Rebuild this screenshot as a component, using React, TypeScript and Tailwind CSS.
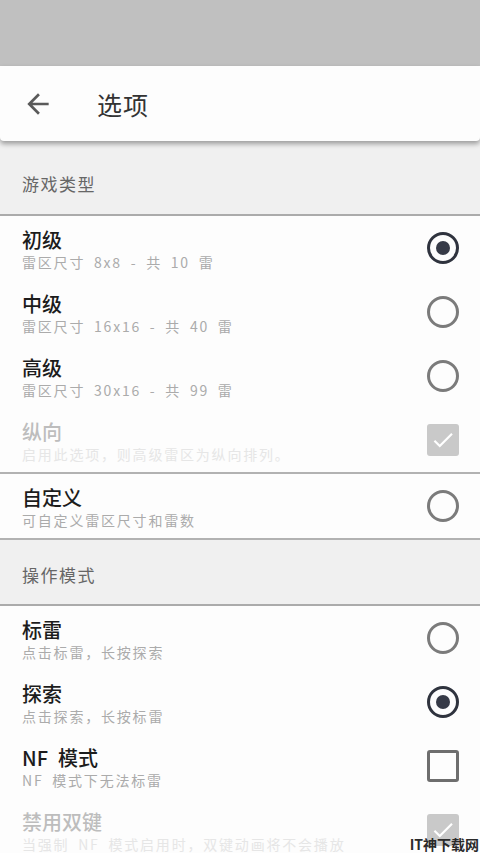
import React from "react";

const font = { fontFamily: '"Noto Sans CJK SC", "Noto Sans", sans-serif' };

type Control = "on" | "off" | "box" | "boxDisabled";

function Radio({ on }: { on: boolean }) {
  if (on) {
    return (
      <div className="w-[32px] h-[32px] rounded-full border-[3.5px] border-[#2f333e] flex items-center justify-center">
        <div className="w-[14px] h-[14px] rounded-full bg-[#363a47]" />
      </div>
    );
  }
  return <div className="w-[32px] h-[32px] rounded-full border-[3px] border-[#7b7b7b]" />;
}

function Check({ disabled }: { disabled: boolean }) {
  if (disabled) {
    return (
      <div className="w-[32px] h-[32px] rounded-[3px] bg-[#c9c9c9] flex items-center justify-center">
        <svg width="26" height="26" viewBox="0 0 24 24">
          <path d="M9 16.2 4.8 12l-1.4 1.4L9 19 21 7l-1.4-1.4L9 16.2z" fill="#ffffff" />
        </svg>
      </div>
    );
  }
  return <div className="w-[32px] h-[32px] rounded-[3px] border-[3px] border-[#6e6e6e]" />;
}

function Row({
  title,
  sub,
  control,
  disabled = false,
  border = false,
}: {
  title: string;
  sub: string;
  control: Control;
  disabled?: boolean;
  border?: boolean;
}) {
  return (
    <div
      className={`flex items-center h-[64px] pl-[22px] pr-[21px] bg-[#fdfdfd] box-content ${
        border ? "border-b-2 border-[#b2b2b2]" : ""
      }`}
    >
      <div className="flex-1 flex flex-col pt-1">
        <div
          className={`text-[20px] leading-[24px] font-medium whitespace-pre ${
            disabled ? "text-[#bdbdbd]" : "text-[#1c1c1c]"
          }`}
        >
          {title}
        </div>
        <div
          className={`text-[14px] leading-[20px] tracking-[1.8px] whitespace-pre ${
            disabled ? "text-[#e6e6e6]" : "text-[#ababab]"
          }`}
        >
          {sub}
        </div>
      </div>
      {control === "on" && <Radio on />}
      {control === "off" && <Radio on={false} />}
      {control === "box" && <Check disabled={false} />}
      {control === "boxDisabled" && <Check disabled />}
    </div>
  );
}

function SectionHeader({ label, top }: { label: string; top: string }) {
  return (
    <div className={`bg-[#f0f0f0] border-b-2 border-[#ababab] pl-[22px] ${top}`}>
      <div className="text-[17px] leading-[24px] text-[#666666] tracking-[1.5px]">{label}</div>
    </div>
  );
}

export default function App() {
  return (
    <div className="relative w-[480px] h-[853px] overflow-hidden bg-[#f0f0f0]" style={font}>
      {/* status bar */}
      <div className="h-[66px] bg-[#c0c0c0]" />

      {/* toolbar */}
      <div className="relative z-10 h-[75px] bg-[#fdfdfd] rounded-b-[4px] shadow-[0_3px_5px_rgba(0,0,0,0.35)] flex items-center">
        <div className="w-[97px] pl-[22px] flex items-center">
          <svg width="32" height="32" viewBox="0 0 24 24">
            <path
              d="M20 11H7.83l5.59-5.59L12 4l-8 8 8 8 1.41-1.41L7.83 13H20v-2z"
              fill="#5a5a5a"
            />
          </svg>
        </div>
        <div className="text-[25px] leading-[30px] text-[#333333] tracking-[1px]">选项</div>
      </div>

      <SectionHeader label="游戏类型" top="h-[75px] pt-[31px]" />

      <Row title="初级" sub={"雷区尺寸\u20028x8\u2002-\u2002共\u200210\u2002雷"} control="on" />
      <Row title="中级" sub={"雷区尺寸\u200216x16\u2002-\u2002共\u200240\u2002雷"} control="off" />
      <Row title="高级" sub={"雷区尺寸\u200230x16\u2002-\u2002共\u200299\u2002雷"} control="off" />
      <Row title="纵向" sub="启用此选项，则高级雷区为纵向排列。" control="boxDisabled" disabled border />
      <Row title="自定义" sub="可自定义雷区尺寸和雷数" control="off" border />

      <SectionHeader label="操作模式" top="h-[66px] pt-[23px]" />

      <Row title="标雷" sub="点击标雷，长按探索" control="off" />
      <Row title="探索" sub="点击探索，长按标雷" control="on" />
      <Row title={"NF\u2002模式"} sub={"NF\u2002模式下无法标雷"} control="box" />
      <Row
        title="禁用双键"
        sub={"当强制\u2002NF\u2002模式启用时，双键动画将不会播放"}
        control="boxDisabled"
        disabled
      />

      {/* watermark */}
      <div className="absolute right-[1px] bottom-[1px] text-[14px] leading-[15px] font-bold text-[#2a2a2a]">
        IT神下载网
      </div>
    </div>
  );
}
